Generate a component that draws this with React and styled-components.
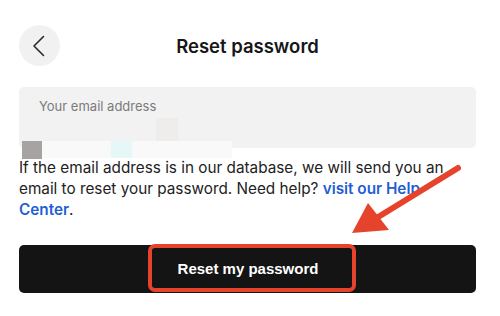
import React from "react";
import styled, { createGlobalStyle } from "styled-components";

const Global = createGlobalStyle`
  html, body { margin: 0; padding: 0; background: #ffffff; }
  body { font-family: Inter, "Noto Sans", sans-serif; color: #1c1c1c; }
  * { box-sizing: border-box; }
`;

const Page = styled.div`
  position: relative;
  width: 500px;
  height: 316px;
  overflow: hidden;
  padding: 25px 24px 0 19px;
`;

const Header = styled.div`
  display: grid;
  grid-template-columns: 41px 1fr 41px;
  align-items: center;
  height: 41px;
`;

const BackButton = styled.button`
  width: 41px;
  height: 41px;
  border-radius: 50%;
  border: none;
  background: #f1f1f1;
  display: flex;
  align-items: center;
  justify-content: center;
  padding: 0;
`;

const Title = styled.h1`
  margin: 0;
  text-align: center;
  font-size: 18.5px;
  font-weight: 600;
  color: #161616;
`;

const Field = styled.div`
  position: relative;
  margin-top: 21px;
`;

const InputBox = styled.div`
  height: 61px;
  border-radius: 5px;
  background: #f2f2f2;
  padding: 11px 20px;
  font-size: 13px;
  color: #7b7b7b;
`;

const Info = styled.p`
  margin: 9px 0 0;
  max-width: 448px;
  font-size: 15.3px;
  line-height: 21px;
  color: #222;
`;

const Link = styled.a`
  color: #1f5fd4;
  font-weight: 600;
  text-decoration: none;
`;

const ResetButton = styled.button`
  margin-top: 25px;
  width: 100%;
  height: 48px;
  border: none;
  border-radius: 5px;
  background: #141414;
  color: #ffffff;
  font-family: "Liberation Sans", Arial, sans-serif;
  font-weight: 700;
  font-size: 15px;
  display: flex;
  align-items: center;
  justify-content: center;
  padding: 0;
`;

const Highlight = styled.span`
  display: flex;
  align-items: center;
  justify-content: center;
  width: 208px;
  height: 48px;
  margin: -2px 0 0 9px;
  padding-right: 8px;
  border: 4px solid #e5432c;
  border-radius: 7px;
`;

const Patch = styled.div`
  position: absolute;
  left: ${(p) => p.$x}px;
  top: ${(p) => p.$y}px;
  width: ${(p) => p.$w}px;
  height: ${(p) => p.$h}px;
  background: ${(p) => p.$c};
`;

const ArrowSvg = styled.svg`
  position: absolute;
  left: 0;
  top: 0;
  pointer-events: none;
`;

export default function App() {
  return (
    <>
      <Global />
      <Page>
        <Header>
          <BackButton aria-label="Back">
            <svg width="22" height="22" viewBox="0 0 22 22">
              <path d="M14.5 1.5 L5 11 L14.5 20.5" fill="none" stroke="#2a2a2a" strokeWidth="1.6" strokeLinecap="round" strokeLinejoin="round" />
            </svg>
          </BackButton>
          <Title>Reset password</Title>
          <span />
        </Header>
        <Field>
          <InputBox>Your email address</InputBox>
          <Patch $x={137} $y={31} $w={22} $h={23} $c="#eeedeb" />
          <Patch $x={23} $y={54} $w={190} $h={17} $c="#f9f9f9" />
          <Patch $x={92} $y={54} $w={21} $h={17} $c="#e6f7f8" />
          <Patch $x={3} $y={54} $w={20} $h={18} $c="#a8a3a3" />
        </Field>
        <Info>
          If the email address is in our database, we will send you an email to reset your password. Need help?{" "}
          <Link href="#">visit our Help Center</Link>.
        </Info>
        <ResetButton>
          <Highlight>Reset my password</Highlight>
        </ResetButton>

        <ArrowSvg width="500" height="316" viewBox="0 0 500 316">
          <line x1="458" y1="168" x2="370" y2="222" stroke="#e5432c" strokeWidth="6" strokeLinecap="round" />
          <polygon points="352,233 368,203 389,230" fill="#e5432c" />
        </ArrowSvg>
      </Page>
    </>
  );
}
